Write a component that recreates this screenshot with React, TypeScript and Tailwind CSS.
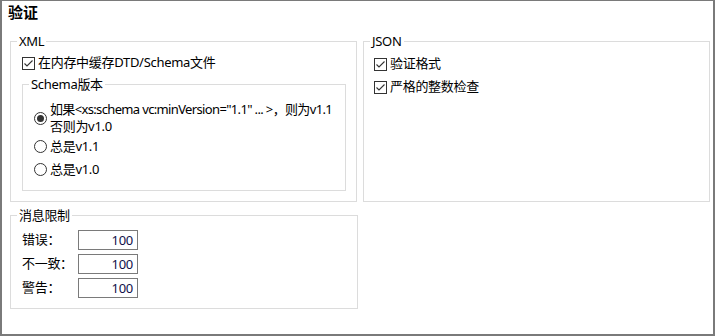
import React from "react";

const FONT = { fontFamily: '"Noto Sans", "Noto Sans CJK SC", sans-serif' };

function CheckBox() {
  return (
    <svg width="13" height="13" viewBox="0 0 13 13" className="shrink-0">
      <rect x="0.5" y="0.5" width="12" height="12" fill="#fff" stroke="#333" />
      <path d="M2.5 6.5 L5 9 L10.5 3.5" fill="none" stroke="#333" strokeWidth="1.1" />
    </svg>
  );
}

function Radio({ on }: { on?: boolean }) {
  return (
    <svg width="13" height="13" viewBox="0 0 13 13" className="shrink-0">
      <circle cx="6.5" cy="6.5" r="6" fill="#fff" stroke="#333" />
      {on && <circle cx="6.5" cy="6.5" r="3.5" fill="#333" />}
    </svg>
  );
}

function Group({
  title,
  className,
  children,
}: {
  title: string;
  className?: string;
  children: React.ReactNode;
}) {
  return (
    <fieldset className={"m-0 p-0 border border-[#dcdcdc] min-w-0 " + (className ?? "")}>
      <legend className="ml-[6px] px-[2px] p-0 text-[13px] leading-[18px] text-black">{title}</legend>
      {children}
    </fieldset>
  );
}

export default function App() {
  return (
    <div
      className="w-[715px] h-[336px] bg-white border-t border-l-2 border-r-2 border-b-2 border-[#7a7a7a] text-black text-[13px] tracking-[-0.3px]"
      style={FONT}
    >
      <div className="pl-[6px] pt-[1px] text-[15px] font-bold leading-[20px] tracking-normal">验证</div>
      <div className="flex gap-[6px] pl-[8px] mt-[10px]">
        <Group title="XML" className="w-[347px]">
          <div className="pl-[11px] pr-[10px] pt-[4px] pb-[10px]">
            <div className="flex items-center gap-[3px] h-[18px]">
              <CheckBox />
              <span>在内存中缓存DTD/Schema文件</span>
            </div>
            <Group title="Schema版本" className="mt-[3px]">
              <div className="pl-[11px] pt-[8px] pb-[12px] leading-[17px]">
                <div className="flex items-center gap-[3px]">
                  <Radio on />
                  <span className="whitespace-nowrap">
                    <span className="tracking-[-0.65px]">如果&lt;xs:schema vc:minVersion="1.1" ... &gt;，则为v1.1</span>
                    <br />
                    否则为v1.0
                  </span>
                </div>
                <div className="flex items-center gap-[3px] mt-[3px]">
                  <Radio />
                  <span>总是v1.1</span>
                </div>
                <div className="flex items-center gap-[3px] mt-[6px]">
                  <Radio />
                  <span>总是v1.0</span>
                </div>
              </div>
            </Group>
          </div>
        </Group>
        <Group title="JSON" className="w-[347px]">
          <div className="pl-[10px] pt-[5px] flex flex-col gap-[5px]">
            <div className="flex items-center gap-[3px] h-[18px]">
              <CheckBox />
              <span>验证格式</span>
            </div>
            <div className="flex items-center gap-[3px] h-[18px]">
              <CheckBox />
              <span>严格的整数检查</span>
            </div>
          </div>
        </Group>
      </div>
      <div className="pl-[8px] mt-[4px]">
        <Group title="消息限制" className="w-[348px]">
          <div className="pl-[11px] pt-[6px] pb-[10px] flex flex-col gap-[4px]">
            {["错误：", "不一致：", "警告："].map((l) => (
              <div key={l} className="flex items-center h-[20px]">
                <span className="w-[56px]">{l}</span>
                <div className="w-[60px] h-[20px] border border-[#7a7a7a] text-right pr-[4px] leading-[18px] text-[#10104a]">
                  100
                </div>
              </div>
            ))}
          </div>
        </Group>
      </div>
    </div>
  );
}
